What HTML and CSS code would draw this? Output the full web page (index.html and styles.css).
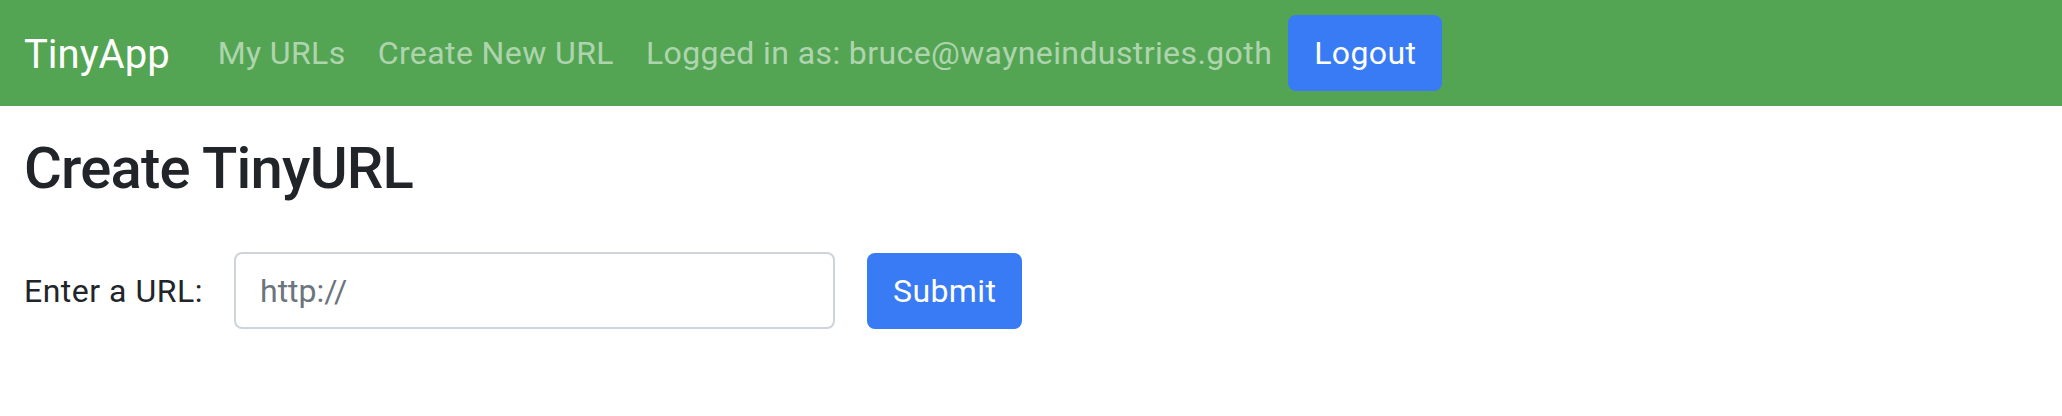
FILE: index.html
```html
<!DOCTYPE html>
<html lang="en">
<head>
<meta charset="utf-8">
<title>TinyApp</title>
<link rel="stylesheet" href="styles.css">
</head>
<body>
<nav class="navbar">
  <a class="brand" href="#">TinyApp</a>
  <ul class="nav">
    <li><a class="nav-link" href="#">My URLs</a></li>
    <li><a class="nav-link" href="#">Create New URL</a></li>
    <li><span class="nav-link">Logged in as: bruce@wayneindustries.goth</span></li>
    <li><button class="btn" type="button">Logout</button></li>
  </ul>
</nav>
<main class="container">
  <h1 class="title">Create TinyURL</h1>
  <form class="form-row">
    <label class="label" for="longURL">Enter a URL:</label>
    <input class="input" id="longURL" type="text" placeholder="http://">
    <button class="btn" type="submit">Submit</button>
  </form>
</main>
</body>
</html>
```
FILE: styles.css
```css
* { box-sizing: border-box; }
html, body { margin: 0; padding: 0; }
body {
  font-family: Roboto, "Noto Sans", "Liberation Sans", sans-serif;
  color: #212529;
  background: #fff;
  font-size: 32px;
}
.navbar {
  height: 106px;
  background: #53a553;
  display: flex;
  align-items: center;
  padding: 0 24px;
}
.brand {
  color: #fff;
  text-decoration: none;
  font-size: 40px;
  line-height: 60px;
  margin-right: 32px;
  margin-top: 4px;
}
.nav {
  list-style: none;
  margin: 0;
  padding: 0;
  display: flex;
  align-items: center;
}
.nav-link {
  display: block;
  padding: 0 16px;
  color: rgba(255,255,255,.55);
  text-decoration: none;
  line-height: 48px;
  letter-spacing: 0.4px;
}
.btn {
  font-family: inherit;
  font-size: 32px;
  line-height: 48px;
  letter-spacing: 0.4px;
  color: #fff;
  background: #387bf5;
  border: 2px solid #387bf5;
  border-radius: 8px;
  padding: 12px 24px;
  height: 76px;
  cursor: pointer;
}
.container {
  padding: 27px 24px 0;
}
.title {
  font-size: 58px;
  font-weight: 500;
  line-height: 70px;
  letter-spacing: -0.8px;
  margin: 0 0 49px;
}
.form-row {
  display: flex;
  align-items: center;
}
.label {
  width: 210px;
  line-height: 48px;
  letter-spacing: 0.5px;
}
.input {
  width: 601px;
  height: 77px;
  font-family: inherit;
  font-size: 32px;
  color: #212529;
  border: 2px solid #ced4da;
  border-radius: 8px;
  padding: 12px 24px;
  margin-right: 32px;
}
.input::placeholder { color: #6c757d; }
```
